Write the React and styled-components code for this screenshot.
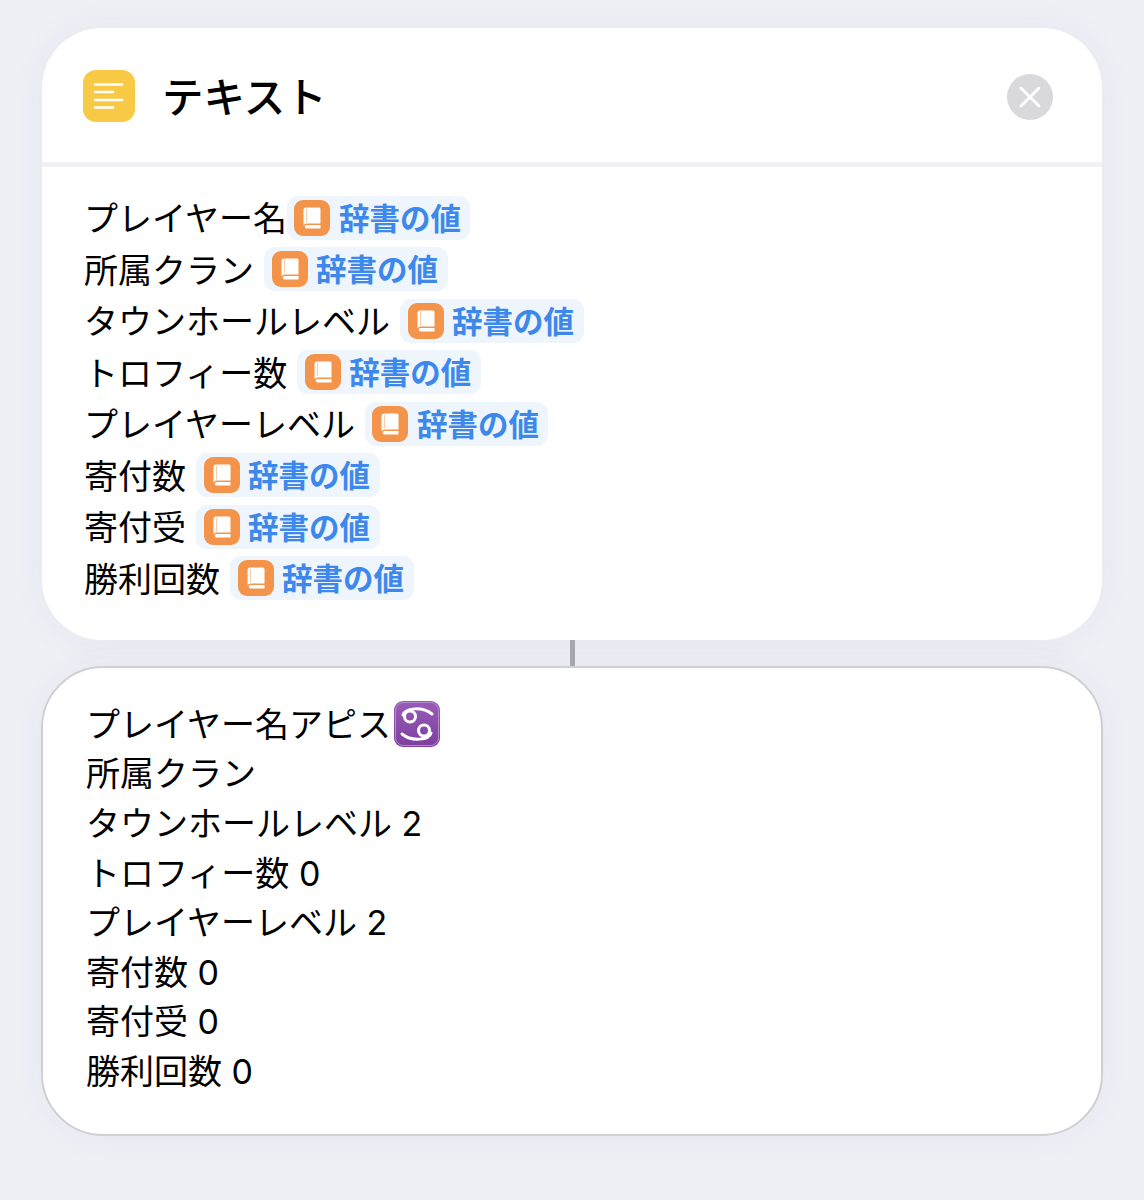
import React from 'react'
import styled, { createGlobalStyle } from 'styled-components'

const FONT = `Inter, "Noto Sans CJK JP", "Noto Sans", sans-serif`

const rows = [
  { label: 'プレイヤー名', gap: 0 },
  { label: '所属クラン', gap: 10 },
  { label: 'タウンホールレベル', gap: 10 },
  { label: 'トロフィー数', gap: 10 },
  { label: 'プレイヤーレベル', gap: 10 },
  { label: '寄付数', gap: 10 },
  { label: '寄付受', gap: 10 },
  { label: '勝利回数', gap: 10 },
]

const results = ['所属クラン', 'タウンホールレベル 2', 'トロフィー数 0', 'プレイヤーレベル 2', '寄付数 0', '寄付受 0', '勝利回数 0']

const TextIcon = () => (
  <svg width="52" height="52" viewBox="0 0 52 52">
    <rect width="52" height="52" rx="13" fill="#f8c945" />
    <g stroke="#fff" strokeWidth="2.6" strokeLinecap="round">
      <path d="M12 14.500h27" />
      <path d="M12 22h18" />
      <path d="M12 30h27" />
      <path d="M12 37.500h18" />
    </g>
  </svg>
)

const BookIcon = () => (
  <svg width="36" height="36" viewBox="0 0 36 36">
    <rect width="36" height="36" rx="9" fill="#f4944a" />
    <path d="M12 7.500h13a1.500 1.500 0 0 1 1.500 1.500v14.500H13a4 4 0 0 0-3.500 1.800V10a2.500 2.500 0 0 1 2.500-2.500z" fill="#fff" />
    <path d="M12.500 8.500v14" stroke="#f6cfae" strokeWidth="1.200" />
    <path d="M12.500 25h14v3.500h-14a1.750 1.750 0 0 1 0-3.500z" fill="#fff" />
  </svg>
)

const CancerIcon = () => (
  <svg width="46" height="46" viewBox="0 0 46 46">
    <defs>
      <linearGradient id="cancerFill" x1="0" y1="0" x2="0" y2="1">
        <stop offset="0" stopColor="#9a5cb8" />
        <stop offset="1" stopColor="#7c3f9e" />
      </linearGradient>
    </defs>
    <rect width="46" height="46" rx="9" fill="url(#cancerFill)" />
    <rect x="1.500" y="1.500" width="43" height="43" rx="8" fill="none" stroke="#b48ccb" strokeWidth="1" />
    <g fill="none" stroke="#fff" strokeWidth="3" strokeLinecap="round">
      <circle cx="16" cy="15.500" r="5.500" />
      <circle cx="30" cy="29.500" r="5.500" />
      <path d="M9 14C11 7 28 5 38 13" />
      <path d="M37 32C35 39 18 41 8 33" />
    </g>
  </svg>
)

export default function App() {
  return (
    <>
      <GlobalStyle />
      <Page>
        <ActionCard>
          <Header>
            <TextIcon />
            <Title>テキスト</Title>
            <CloseButton>
              <svg width="22" height="22" viewBox="0 0 22 22">
                <path d="M2 2l18 18M20 2L2 20" stroke="#fff" strokeWidth="2.800" strokeLinecap="round" />
              </svg>
            </CloseButton>
          </Header>
          <VariableList>
            {rows.map((row) => (
              <VariableRow key={row.label}>
                <RowLabel>{row.label}</RowLabel>
                <Chip $gap={row.gap}>
                  <BookIcon />
                  <ChipLabel>辞書の値</ChipLabel>
                </Chip>
              </VariableRow>
            ))}
          </VariableList>
        </ActionCard>
        <Connector />
        <ResultCard>
          <ResultRow>
            プレイヤー名アピス
            <EmojiSlot>
              <CancerIcon />
            </EmojiSlot>
          </ResultRow>
          {results.map((line) => (
            <ResultRow key={line}>{line}</ResultRow>
          ))}
        </ResultCard>
      </Page>
    </>
  )
}

const GlobalStyle = createGlobalStyle`
  html, body {
    margin: 0;
    background: #eff0f6;
  }
`

const Page = styled.div`
  width: 1144px;
  height: 1200px;
  box-sizing: border-box;
  padding-top: 28px;
  display: flex;
  flex-direction: column;
  align-items: center;
  overflow: hidden;
  font-family: ${FONT};
  color: #000;
`

const ActionCard = styled.section`
  width: 1060px;
  height: 612px;
  flex: none;
  background: #fff;
  border-radius: 60px;
  overflow: hidden;
  box-shadow: 0 0 40px rgba(60, 60, 90, 0.05);
`

const Header = styled.header`
  height: 132px;
  box-sizing: content-box;
  display: flex;
  align-items: center;
  padding: 2px 49px 0 41px;
  border-bottom: 5px solid #f0f0f5;
`

const Title = styled.h1`
  margin: 6px 0 0 27px;
  flex: 1;
  font-size: 41.500px;
  line-height: 1;
  font-weight: 500;
`

const CloseButton = styled.div`
  width: 46px;
  height: 46px;
  margin-top: 2px;
  border-radius: 50%;
  background: #d9d9dc;
  display: flex;
  align-items: center;
  justify-content: center;
`

const VariableList = styled.div`
  padding: 25px 0 0 42px;
`

const VariableRow = styled.div`
  height: 51.500px;
  display: flex;
  align-items: center;
  font-size: 34px;
  white-space: nowrap;
`

const RowLabel = styled.span`
  padding-bottom: 2px;
`

const Chip = styled.span`
  margin-left: ${(p) => p.$gap}px;
  height: 44px;
  display: inline-flex;
  align-items: center;
  gap: 8.500px;
  padding: 0 9.500px 0 7.500px;
  background: #eef5fd;
  border-radius: 11px;
`

const ChipLabel = styled.span`
  font-size: 30.500px;
  font-weight: 700;
  color: #3d88ea;
  padding-bottom: 2px;
`

const Connector = styled.div`
  width: 5px;
  height: 26px;
  flex: none;
  background: #a8a8ae;
`

const ResultCard = styled.section`
  width: 1062px;
  height: 470px;
  flex: none;
  box-sizing: border-box;
  padding: 29.500px 43px 0;
  background: #fff;
  border: 2px solid #cfcfd4;
  border-radius: 62px;
  box-shadow: 0 0 40px rgba(60, 60, 90, 0.05);
`

const ResultRow = styled.div`
  height: 49.600px;
  display: flex;
  align-items: center;
  font-size: 34px;
  white-space: pre;
`

const EmojiSlot = styled.span`
  display: inline-flex;
  margin: 3px 0 0 3px;
`
